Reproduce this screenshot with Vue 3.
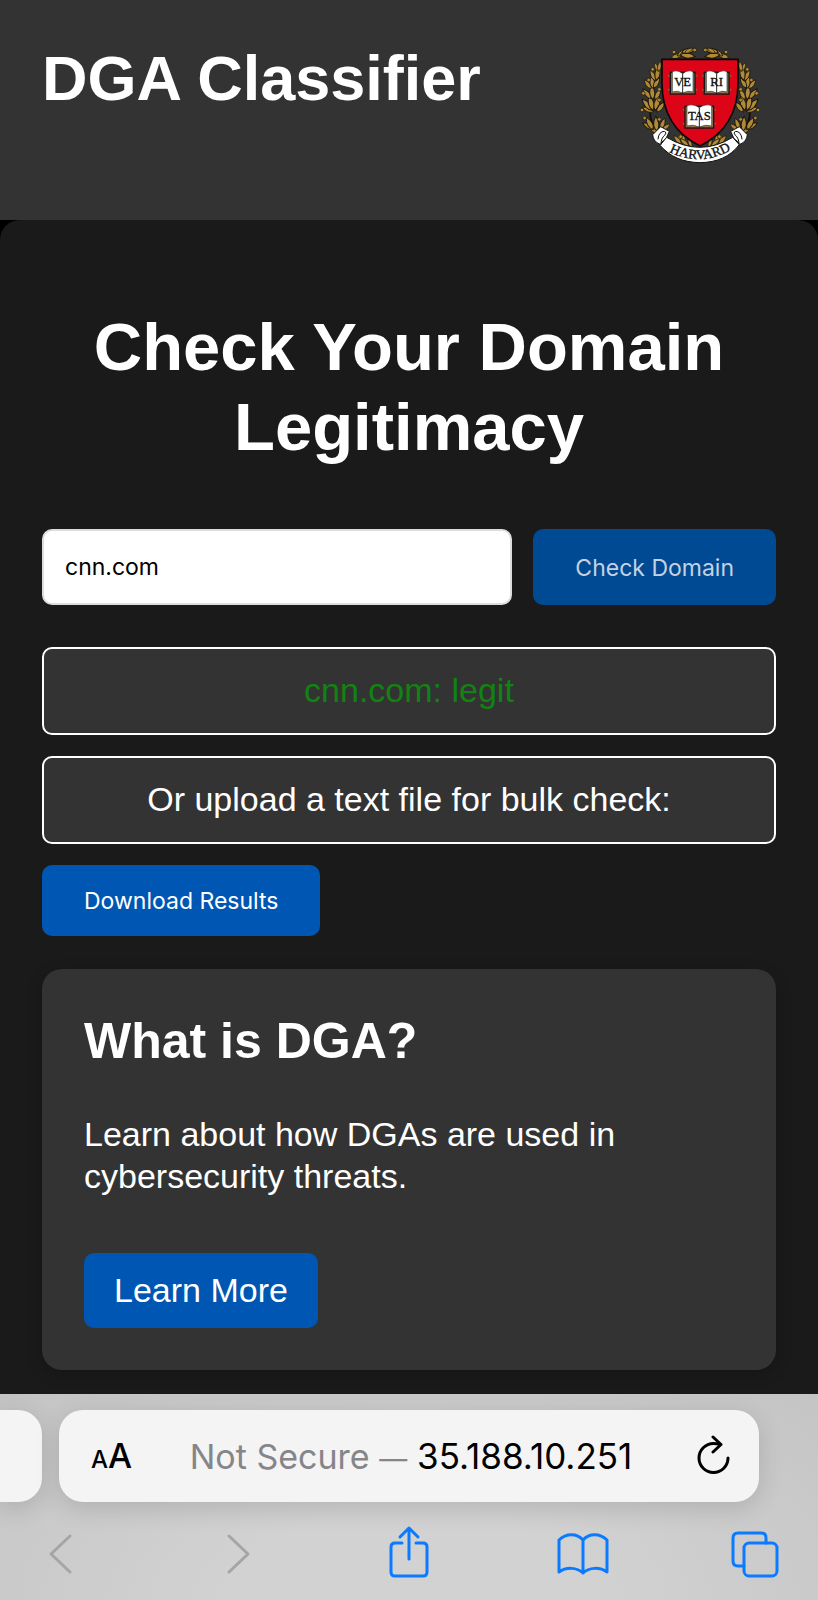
<script setup>
import { ref } from 'vue'

const domain = ref('cnn.com')
const result = ref('cnn.com: legit')

// Laurel leaves of one side of the crest: x, y, rotation, scale
const leaves = [
  [128, 312, -80, 1.2], [112, 308, -50, 1.3], [100, 296, -62, 1.4], [98, 296, -30, 1.5],
  [110, 300, -4, 1.6], [122, 296, 22, 1.3], [128, 300, 50, 1.1],
  [98, 244, -70, 1.3], [94, 238, -42, 1.6], [98, 238, -14, 1.7], [106, 238, 14, 1.7],
  [112, 244, 38, 1.4], [92, 204, -40, 1.4], [98, 206, -4, 1.6], [106, 206, 28, 1.3],
  [92, 174, -38, 1.2], [98, 172, -6, 1.4], [102, 172, 30, 1.3], [106, 150, -28, 1.3], [110, 148, 8, 1.6],
  [114, 122, -24, 1], [116, 122, 10, 1.1],
  [156, 82, 76, 1.3], [174, 76, 58, 1.3], [184, 74, 98, 1.6], [188, 66, 78, 1.5], [196, 68, 58, 1],
  [172, 336, 25, 1.1], [182, 340, -42, 1.2], [190, 340, 0, 1.1], [204, 346, -50, 1.2], [214, 350, -20, 1]
]
const berries = [
  [70, 190], [66, 240], [74, 264], [86, 150], [98, 118], [118, 268], [118, 210], [118, 178], [162, 66], [224, 60], [182, 320]
]
const books = [
  { x: 188, y: 158, text: 'VE', w: 31 },
  { x: 290, y: 158, text: 'RI', w: 31 },
  { x: 238, y: 260, text: 'TAS', w: 37 }
]
</script>

<template>
  <div class="screen">
    <header class="site-header">
      <h1>DGA Classifier</h1>
      <svg class="crest" viewBox="12 36 456 408" role="img" aria-label="Harvard crest">
        <defs>
          <g id="branch">
            <path d="M150 335C95 315 78 250 98 190C102 160 106 130 122 108" fill="none" stroke="#15120b" stroke-width="6" />
            <path
              v-for="(l, i) in leaves"
              :key="i"
              d="M0 2C7 -6 6 -16 0 -26C-6 -16 -7 -6 0 2Z"
              :transform="`translate(${l[0]} ${l[1]}) rotate(${l[2]}) scale(${l[3]})`"
              fill="#b08a38" stroke="#1d180c" stroke-width="2"
            />
            <circle v-for="(b, i) in berries" :key="'b' + i" :cx="b[0]" :cy="b[1]" r="5.5" fill="#b08a38" stroke="#1d180c" stroke-width="2" />
          </g>
          <path id="motto-arc" d="M134 358Q240 420 346 352" />
        </defs>
        <use href="#branch" />
        <use href="#branch" transform="translate(480 0) scale(-1 1)" />
        <path d="M126 88H354V160C354 245 318 310 240 348C162 310 126 245 126 160Z" fill="#dc0416" stroke="#090909" stroke-width="5" />
        <g v-for="b in books" :key="b.text" :transform="`translate(${b.x} ${b.y})`">
          <path :d="`M${-b.w - 13} -21h14m-14 42h14M${b.w + 13} -21h-14m14 42h-14`" stroke="#84601f" stroke-width="6" />
          <rect :x="-b.w - 6" y="-31" :width="b.w * 2 + 12" height="65" fill="#8b7650" stroke="#161616" stroke-width="4" />
          <path :d="`M0 -27Q${-b.w / 2} -40 ${-b.w} -33V28Q${-b.w / 2} 22 0 31Q${b.w / 2} 22 ${b.w} 28V-33Q${b.w / 2} -40 0 -27Z`" fill="#fff" stroke="#333" stroke-width="2" />
          <path d="M0 -27V36" stroke="#222" stroke-width="3" />
          <text class="book-text" y="9" text-anchor="middle">{{ b.text }}</text>
        </g>
        <g stroke="#111" stroke-width="3" stroke-linejoin="round">
          <path d="M98 314L122 290L148 304L138 326L118 342Q100 334 98 314Z" fill="#fff" />
          <path d="M382 314L358 290L332 304L342 326L362 342Q380 334 382 314Z" fill="#fff" />
          <path d="M140 322Q240 382 338 322L358 344C330 380 292 397 240 398C188 397 150 380 120 346Z" fill="#fff" />
          <path d="M114 328Q116 304 134 304Q142 308 134 316Q124 322 122 346" fill="#fff" />
          <path d="M366 328Q364 304 346 304Q338 308 346 316Q356 322 358 346" fill="#fff" />
        </g>
        <text class="ribbon-text" text-anchor="middle"><textPath href="#motto-arc" startOffset="50%">HARVARD</textPath></text>
      </svg>
    </header>

    <div class="main-wrap">
      <main>
        <h2>Check Your Domain Legitimacy</h2>
        <form class="check-form" @submit.prevent>
          <input v-model="domain" type="text" aria-label="Domain" />
          <button class="btn pressed" type="submit">Check Domain</button>
        </form>
        <p class="panel legit">{{ result }}</p>
        <p class="panel">Or upload a text file for bulk check:</p>
        <button class="btn download" type="button">Download Results</button>
        <section class="card">
          <h3>What is DGA?</h3>
          <p>Learn about how DGAs are used in cybersecurity threats.</p>
          <a class="learn" href="#dga">Learn More</a>
        </section>
      </main>
    </div>

    <footer class="browser-bar">
      <div class="tabs-row">
        <div class="previous-tab"></div>
        <div class="address">
          <button class="text-size" type="button" aria-label="Page settings"><span class="small-a">A</span>A</button>
          <button class="url" type="button"><span class="insecure">Not Secure <span class="dash">—</span></span> 35.188.10.251</button>
          <button class="reload" type="button" aria-label="Reload">
            <svg width="36" height="42" viewBox="0 0 36 42" fill="none" stroke="#000" stroke-width="3" stroke-linecap="round" stroke-linejoin="round">
              <path d="M33 23A14.500 14.500 0 1 1 18.500 8.500C21 8.500 23 8.800 25 9.500" />
              <path d="M18 2L26 9.500L18 17" />
            </svg>
          </button>
        </div>
      </div>
      <nav class="tools" aria-label="Browser">
        <button type="button" aria-label="Back" disabled>
          <svg class="icon faded" viewBox="0 0 50 56"><path d="M35 12L16 30L35 48" /></svg>
        </button>
        <button type="button" aria-label="Forward" disabled>
          <svg class="icon faded" viewBox="0 0 50 56"><path d="M19 12L38 30L19 48" /></svg>
        </button>
        <button type="button" aria-label="Share">
          <svg class="icon" viewBox="0 0 50 56"><path d="M18 19H11Q7 19 7 23V48Q7 52 11 52H39Q43 52 43 48V23Q43 19 39 19H32M25 35V5M16 13L25 4L34 13" /></svg>
        </button>
        <button type="button" aria-label="Bookmarks">
          <svg class="icon" viewBox="0 0 50 56"><path d="M24 16C18 9 7 9 0 16V48C7 43 18 43 24 49C30 43 41 43 48 48V16C41 9 30 9 24 16ZM24 16V49" /></svg>
        </button>
        <button type="button" aria-label="Tabs">
          <svg class="icon" viewBox="0 0 50 56"><rect x="11" y="19" width="33" height="33" rx="5" /><path d="M11 42H5Q0 42 0 37V14Q0 9 5 9H28Q33 9 33 14V19" /></svg>
        </button>
      </nav>
    </footer>
  </div>
</template>

<style>
body { margin: 0; background: #000; }
</style>

<style scoped>
* { box-sizing: border-box; }
h1, h2, h3, p { margin: 0; }
button { border: 0; background: none; padding: 0; margin: 0; color: inherit; font: inherit; cursor: pointer; }
.screen {
  display: flex;
  flex-direction: column;
  min-height: 100vh;
  color: #fff;
  font-family: "Liberation Sans", Arial, sans-serif;
  font-size: 34px;
  line-height: 42px;
}
.site-header {
  display: flex;
  justify-content: space-between;
  align-items: flex-start;
  padding: 42px;
  background: #333;
}
h1 { font-size: 63px; line-height: 72px; }
.crest { display: block; width: 152px; height: 136px; overflow: visible; }
.book-text { font: 38px "Liberation Serif", serif; fill: #111; stroke: #111; stroke-width: 1px; }
.ribbon-text { font: 41px "Liberation Serif", serif; fill: #111; stroke: #111; stroke-width: 1px; }
.main-wrap { flex: 1; display: flex; background: #000; }
main {
  flex: 1;
  padding: 87px 42px 23px;
  background: #1a1a1a;
  border-radius: 20px 20px 0 0;
}
h2 { font-size: 67px; line-height: 80px; text-align: center; }
.check-form { display: flex; gap: 21px; margin-top: 62px; }
.check-form input {
  flex: 1;
  min-width: 0;
  padding: 20px 21px;
  border: 2px solid #ddd;
  border-radius: 10px;
  background: #fff;
  color: #000;
  font: 23px/32px Inter, sans-serif;
}
.btn {
  padding: 20px 42px 19px;
  border-radius: 10px;
  background: #0056b3;
  color: #fff;
  font: 23px/32px Inter, sans-serif;
}
.pressed { background: #004a94; color: #c4d2e2; }
.panel {
  margin-top: 21px;
  padding: 20px 21px 22px;
  border: 2px solid #fff;
  border-radius: 10px;
  background: #333;
  text-align: center;
}
.legit { margin-top: 42px; color: #128212; }
.download { display: block; margin-top: 21px; }
.card {
  margin-top: 33px;
  padding: 42px;
  border-radius: 20px;
  background: #333;
  box-shadow: 0 4px 16px rgba(0, 0, 0, 0.2);
}
.card h3 { font-size: 50px; line-height: 60px; }
.card p { margin-top: 42px; }
.learn {
  display: inline-block;
  margin-top: 56px;
  padding: 16px 30px 17px;
  border-radius: 10px;
  background: #0056b3;
  color: #fff;
  text-decoration: none;
}
.browser-bar {
  padding: 16px 0 20px;
  overflow: hidden;
  background: radial-gradient(ellipse at 50% 100%, #d2d2d2 30%, #c4c4c4 100%);
  color: #000;
  font-family: Inter, sans-serif;
  font-size: 35px;
}
.tabs-row { display: flex; gap: 17px; padding-right: 59px; }
.previous-tab, .address { background: #f4f4f4; box-shadow: 0 6px 26px rgba(0, 0, 0, 0.14); }
.previous-tab { width: 42px; border-radius: 0 24px 24px 0; }
.address {
  flex: 1;
  display: grid;
  grid-template-columns: 1fr auto 1fr;
  align-items: center;
  padding: 25px 28px 25px 32px;
  border-radius: 24px;
}
.text-size { justify-self: start; font-size: 34px; font-weight: 500; }
.small-a { font-size: 24px; line-height: 24px; }
.insecure { font-size: 34px; line-height: 34px; color: #85858a; }
.dash { font-size: 28px; line-height: 28px; }
.url { white-space: nowrap; }
.reload { justify-self: end; }
.reload svg { display: block; }
.tools { display: flex; justify-content: space-between; padding: 22px 35px 0; }
.icon {
  display: block;
  width: 50px;
  height: 56px;
  overflow: visible;
  fill: none;
  stroke: #0a7aff;
  stroke-width: 3;
  stroke-linecap: round;
  stroke-linejoin: round;
}
.faded { stroke: #a5a5a5; }
</style>
